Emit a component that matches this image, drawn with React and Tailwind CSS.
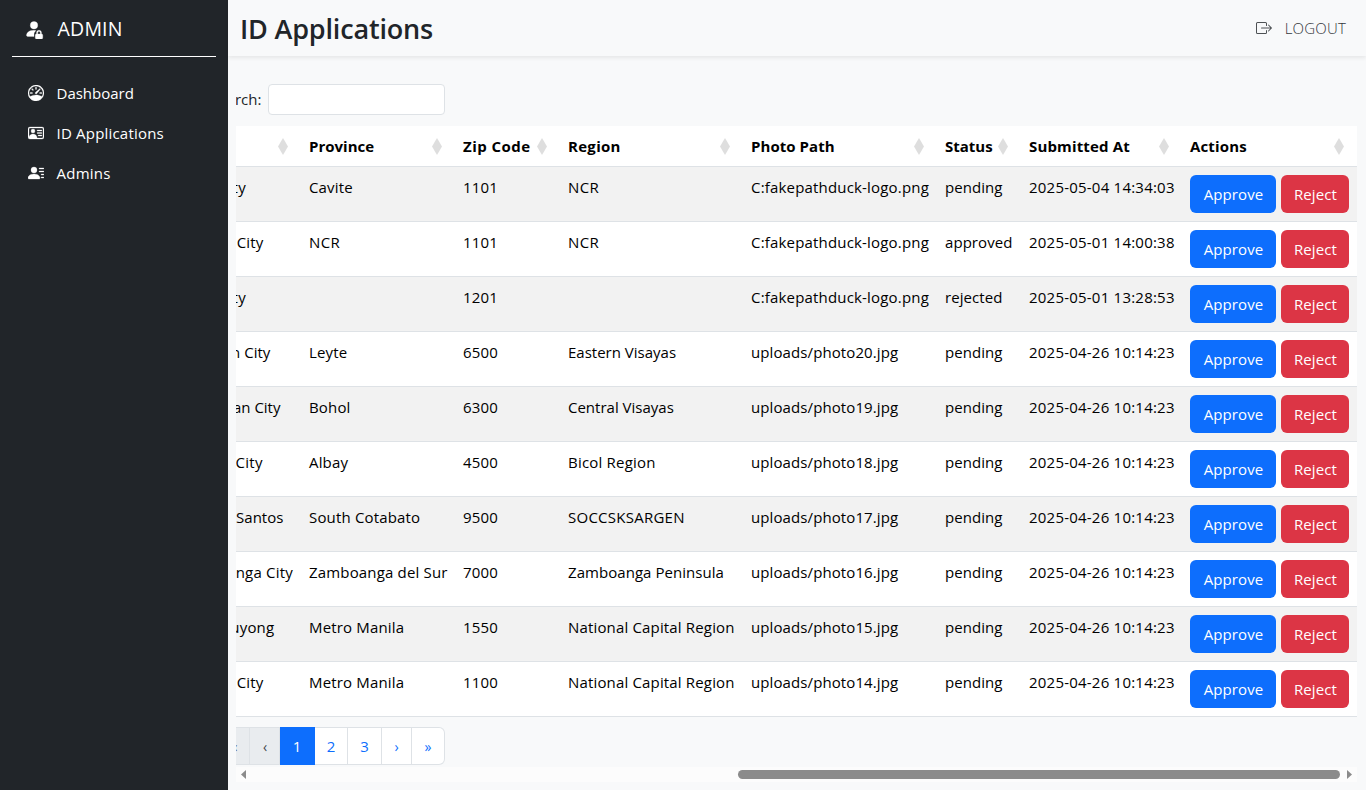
import React from "react";
import {
  BsPersonFillLock,
  BsSpeedometer,
  BsPersonVcard,
  BsPersonLinesFill,
  BsBoxArrowRight,
} from "react-icons/bs";

const nav = [
  { label: "Dashboard", icon: BsSpeedometer, style: "tracking-[0px]" },
  { label: "ID Applications", icon: BsPersonVcard, style: "tracking-[0.2px]" },
  { label: "Admins", icon: BsPersonLinesFill, style: "tracking-[0.25px]" },
];

const columns = [
  { label: "City", width: "w-[132px]", head: "", body: "tracking-[0.17px]" },
  { label: "Province", width: "w-[154px]", head: "", body: "tracking-[0.17px]" },
  { label: "Zip Code", width: "w-[105px]", head: "tracking-[0.45px]", body: "tracking-[0.2px]" },
  { label: "Region", width: "w-[183px]", head: "tracking-[0.3px]", body: "tracking-[0.1px]" },
  { label: "Photo Path", width: "w-[194px]", head: "tracking-[0.05px]", body: "tracking-[0.18px]" },
  { label: "Status", width: "w-[84px]", head: "", body: "tracking-[0.06px]" },
  { label: "Submitted At", width: "w-[161px]", head: "tracking-[0.15px]", body: "tracking-[0.22px]" },
  { label: "Actions", width: "w-[175px]", head: "tracking-[0.15px]", body: "" },
];

const rows = [
  ["Cebu City", "Cavite", "1101", "NCR", "C:fakepathduck-logo.png", "pending", "2025-05-04 14:34:03"],
  ["Quezon City", "NCR", "1101", "NCR", "C:fakepathduck-logo.png", "approved", "2025-05-01 14:00:38"],
  ["Cebu City", "", "1201", "", "C:fakepathduck-logo.png", "rejected", "2025-05-01 13:28:53"],
  ["Tacloban City", "Leyte", "6500", "Eastern Visayas", "uploads/photo20.jpg", "pending", "2025-04-26 10:14:23"],
  ["Tagbilaran City", "Bohol", "6300", "Central Visayas", "uploads/photo19.jpg", "pending", "2025-04-26 10:14:23"],
  ["Legazpi City", "Albay", "4500", "Bicol Region", "uploads/photo18.jpg", "pending", "2025-04-26 10:14:23"],
  ["General Santos", "South Cotabato", "9500", "SOCCSKSARGEN", "uploads/photo17.jpg", "pending", "2025-04-26 10:14:23"],
  ["Zamboanga City", "Zamboanga del Sur", "7000", "Zamboanga Peninsula", "uploads/photo16.jpg", "pending", "2025-04-26 10:14:23"],
  ["Mandaluyong", "Metro Manila", "1550", "National Capital Region", "uploads/photo15.jpg", "pending", "2025-04-26 10:14:23"],
  ["Quezon City", "Metro Manila", "1100", "National Capital Region", "uploads/photo14.jpg", "pending", "2025-04-26 10:14:23"],
];

// Long or short labels that need their own letter spacing within a column.
const spacing = {
  NCR: "tracking-[0.4px]",
  "Cebu City": "tracking-[0.3px]",
  "General Santos": "tracking-[0px]",
  "Tacloban City": "tracking-[0px]",
  "Tagbilaran City": "tracking-[0px]",
  "Legazpi City": "tracking-[0.25px]",
  "Zamboanga City": "tracking-[0.22px]",
  "Eastern Visayas": "tracking-[0px]",
  "Central Visayas": "tracking-[0px]",
  "Bicol Region": "tracking-[0.2px]",
  SOCCSKSARGEN: "tracking-[0.25px]",
  "Zamboanga Peninsula": "tracking-[0.05px]",
  "National Capital Region": "tracking-[0.16px]",
  "uploads/photo20.jpg": "tracking-[0.1px]",
  "uploads/photo19.jpg": "tracking-[0.1px]",
  "uploads/photo18.jpg": "tracking-[0.1px]",
  "uploads/photo17.jpg": "tracking-[0.1px]",
  "uploads/photo16.jpg": "tracking-[0.1px]",
  "uploads/photo15.jpg": "tracking-[0.1px]",
  "uploads/photo14.jpg": "tracking-[0.1px]",
};

const pages = [
  { label: "«", style: "w-[33px] bg-[#e9ecef] pl-0.5 text-[14px] text-[#5c636a]" },
  { label: "‹", style: "w-[30px] bg-[#e9ecef] pl-px text-[14px] text-[#41474d]" },
  { label: "1", style: "w-[35px] bg-[#0d6efd] text-white border-[#0d6efd]!" },
  { label: "2", style: "w-[33px] bg-white text-[#0d6efd]" },
  { label: "3", style: "w-[34px] bg-white text-[#0d6efd]" },
  { label: "›", style: "w-[30px] bg-white text-[14px] text-[#0d6efd]" },
  { label: "»", style: "w-[33px] bg-white text-[14px] text-[#0d6efd] rounded-r-md" },
];

function SortIcon() {
  return (
    <svg className="h-[17px] w-[10px] shrink-0" viewBox="0 0 10 17" fill="#dedede">
      <path d="M5 0 10 8.5 5 17 0 8.5Z" />
    </svg>
  );
}

function Sidebar() {
  return (
    <aside className="flex w-[228px] shrink-0 flex-col bg-[#212529] px-3 text-white">
      <div className="flex h-[57px] items-center gap-[13.5px] border-b border-white pt-0.5 pl-3">
        <BsPersonFillLock className="size-5 stroke-[0.2]" />
        <span className="text-[19.5px] tracking-[0.2px]">ADMIN</span>
      </div>
      <nav className="flex flex-col pt-4">
        {nav.map(({ label, icon: Icon, style }) => (
          <a key={label} className="flex h-10 items-center gap-[12.5px] pl-4 text-[15px]">
            <Icon className="size-4 stroke-[0.3]" />
            <span className={style}>{label}</span>
          </a>
        ))}
      </nav>
    </aside>
  );
}

function ApplicationsTable() {
  return (
    <table className="-ml-[67px] w-[1188px] table-fixed border-collapse text-left whitespace-nowrap text-black">
      <thead>
        <tr className="h-10 border-b border-[#dee2e6] bg-white">
          {columns.map(({ label, width, head }) => (
            <th key={label} className={`${width} p-0 pt-px pr-[13px] pl-2 align-middle font-bold`}>
              <div className="flex items-center justify-between">
                <span className={head}>{label}</span>
                <SortIcon />
              </div>
            </th>
          ))}
        </tr>
      </thead>
      <tbody>
        {rows.map((row, i) => (
          <tr key={i} className="h-[55px] border-b border-[#dee2e6] odd:bg-[#f2f2f2] even:bg-white">
            {row.map((cell, j) => (
              <td key={j} className="p-0 pt-2 pl-2 align-top leading-6">
                <span className={spacing[cell] || columns[j].body}>{cell}</span>
              </td>
            ))}
            <td className="p-0 pt-2 pl-2 align-top">
              <div className="flex gap-[5px] text-white">
                <button className="h-[38px] w-[86px] rounded-md bg-[#0d6efd] pt-0.5 pl-px tracking-[0.1px]">Approve</button>
                <button className="h-[38px] w-[68px] rounded-md bg-[#dc3545] pt-0.5 pl-px tracking-[0.1px]">Reject</button>
              </div>
            </td>
          </tr>
        ))}
      </tbody>
    </table>
  );
}

function Scrollbar() {
  return (
    <div className="flex h-[15px] w-[1121px] items-center bg-[#fcfcfc] pt-px pr-1 pl-[5px]">
      <svg className="h-[9px] w-[5px]" viewBox="0 0 5 9" fill="#8b8b8b">
        <path d="M5 0V9L0 4.5Z" />
      </svg>
      <div className="ml-[492px] h-[9px] w-[602px] rounded-full bg-[#8b8b8b]" />
      <svg className="ml-[7px] h-[9px] w-[5px]" viewBox="0 0 5 9" fill="#8b8b8b">
        <path d="M0 0V9L5 4.5Z" />
      </svg>
    </div>
  );
}

export default function App() {
  return (
    <div className="flex h-[790px] w-[1366px] overflow-hidden bg-[#f8f9fa] font-['Open_Sans','Noto_Sans',sans-serif] text-[15px] text-[#212529]">
      <Sidebar />
      <main className="flex min-w-0 flex-1 flex-col">
        <header className="flex h-14 shrink-0 items-center justify-between pr-5 pl-3 shadow-[0_2px_4px_rgba(0,0,0,0.075)]">
          <h1 className="pt-0.5 text-[27px] font-semibold tracking-[-0.17px]">ID Applications</h1>
          <a className="flex items-center gap-[13px] text-[#4d5154]">
            <BsBoxArrowRight className="size-4" />
            <span className="font-light tracking-[0.2px] text-[#33373a]">LOGOUT</span>
          </a>
        </header>
        <section className="ml-2 flex w-[1121px] flex-col overflow-hidden pt-7">
          <label className="-ml-[26px] flex h-[31px] items-center">
            <span className="w-[51px] text-right">Search:</span>
            <input className="ml-[7px] h-[31px] w-[177px] rounded border border-[#dee2e6] bg-white" />
          </label>
          <div className="mt-[11px]">
            <ApplicationsTable />
          </div>
          <div className="mt-[10px] -ml-[19px] flex h-[38px]">
            {pages.map(({ label, style }) => (
              <span
                key={label}
                className={`flex items-center justify-center border-y border-r border-[#dee2e6] pt-0.5 ${style}`}
              >
                {label}
              </span>
            ))}
          </div>
          <div className="mt-0.5">
            <Scrollbar />
          </div>
        </section>
      </main>
    </div>
  );
}
